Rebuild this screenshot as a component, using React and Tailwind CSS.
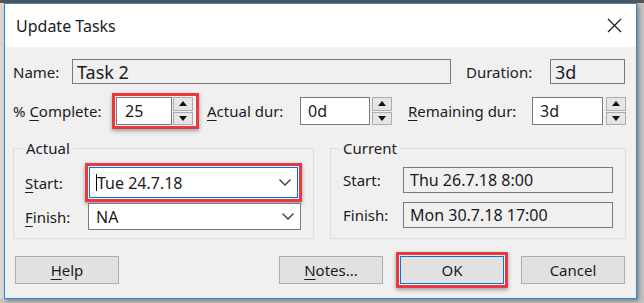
const red = 'border-[3px] border-[#e8393f] p-[1px] shadow-[0_2px_4px_rgba(0,0,0,0.35)]'

function U({ children }) {
  return <span className="underline underline-offset-[3px] decoration-1">{children}</span>
}

function Tri({ down }) {
  return (
    <svg width="8" height="5" viewBox="0 0 8 5">
      <path d={down ? 'M0 0 L8 0 L4 5 Z' : 'M0 5 L4 0 L8 5 Z'} fill="#111" />
    </svg>
  )
}

function Spinner() {
  return (
    <div className="flex flex-col gap-[1px] w-[20px] h-[28px]">
      <div className="flex-1 flex items-center justify-center bg-[#e5e5e5] border border-[#adadad]">
        <Tri />
      </div>
      <div className="flex-1 flex items-center justify-center bg-[#e5e5e5] border border-[#adadad]">
        <Tri down />
      </div>
    </div>
  )
}

function Chevron() {
  return (
    <svg width="12" height="7" viewBox="0 0 12 7">
      <polyline points="0.5,0.5 6,6 11.5,0.5" fill="none" stroke="#3a3a3a" strokeWidth="1.3" />
    </svg>
  )
}

export default function App() {
  return (
    <div className="w-[644px] h-[303px] bg-[#c4c4c4] overflow-hidden font-['Noto_Sans',sans-serif] text-[#1b1b22] text-[15px] leading-[20px]">
      <div className="h-[3px] bg-[#555555]" />
      <div className="flex">
        <div className="w-[4px] h-[296px] bg-[#d8d8d8]" />
        <div className="w-[633px] h-[296px] border border-[#2b88d8] bg-[#f0f0f0] flex flex-col shadow-[2px_2px_4px_rgba(0,0,0,0.35)]">
          {/* title bar */}
          <div className="h-[43px] bg-white flex items-center justify-between pl-[11px] pr-[14px]">
            <span className="text-[16px]">Update Tasks</span>
            <svg width="15" height="15" viewBox="0 0 15 15">
              <path d="M1 1 L14 14 M14 1 L1 14" stroke="#1a1a1a" strokeWidth="1.2" />
            </svg>
          </div>

          <div className="flex-1 px-[8px] pt-[12px]">
            {/* row 1 */}
            <div className="flex items-center h-[25px]">
              <span className="w-[59px]">Name:</span>
              <div className="w-[379px] h-[25px] border border-[#7a7a7a] pl-[4px] flex items-center text-[18px]">Task 2</div>
              <span className="ml-[15px] w-[84px]">Duration:</span>
              <div className="w-[75px] h-[25px] border border-[#7a7a7a] pl-[4px] flex items-center text-[18px]">3d</div>
            </div>

            {/* row 2 */}
            <div className="mt-[9px] flex items-center h-[36px]">
              <span className="w-[99px]">% <U>C</U>omplete:</span>
              <div className={`w-[87px] h-[36px] flex gap-[1px] ${red}`}>
                <div className="w-[56px] h-[28px] bg-white border border-[#7a7a7a] pl-[8px] flex items-center text-[16px]">25</div>
                <Spinner />
              </div>
              <span className="ml-[8px] w-[93px]"><U>A</U>ctual dur:</span>
              <div className="w-[70px] h-[28px] bg-white border border-[#7a7a7a] pl-[7px] flex items-center text-[16px]">0d</div>
              <div className="ml-[2px]"><Spinner /></div>
              <span className="ml-[16px] w-[124px]"><U>R</U>emaining dur:</span>
              <div className="w-[71px] h-[28px] bg-white border border-[#7a7a7a] pl-[7px] flex items-center text-[16px]">3d</div>
              <div className="ml-[3px]"><Spinner /></div>
            </div>

            {/* groups */}
            <div className="mt-[9px] flex gap-[16px]">
              <fieldset className="w-[300px] h-[101px] border border-[#dcdcdc]">
                <legend className="ml-[9px] px-[3px] leading-[20px]">Actual</legend>
                <div className="px-[11px] pt-[5px]">
                  <div className="flex items-center">
                    <span className="w-[60px]"><U>S</U>tart:</span>
                    <div className={`w-[217px] h-[39px] ${red}`}>
                      <div className="h-full bg-white border border-[#0078d7] pl-[6px] pr-[6px] flex items-center justify-between text-[16px]">
                        <span className="flex items-center">
                          <span className="w-[1px] h-[17px] bg-black" />
                          <span>Tue 24.7.18</span>
                        </span>
                        <Chevron />
                      </div>
                    </div>
                  </div>
                  <div className="flex items-center mt-[1px]">
                    <span className="w-[63px]"><U>F</U>inish:</span>
                    <div className="w-[213px] h-[27px] bg-white border border-[#7a7a7a] pl-[7px] pr-[6px] flex items-center justify-between text-[16px]">
                      <span>NA</span>
                      <Chevron />
                    </div>
                  </div>
                </div>
              </fieldset>

              <fieldset className="w-[295px] h-[101px] border border-[#dcdcdc]">
                <legend className="ml-[9px] px-[3px] leading-[20px]">Current</legend>
                <div className="px-[12px] pt-[9px]">
                  <div className="flex items-center">
                    <span className="w-[60px]">Start:</span>
                    <div className="w-[210px] h-[26px] border border-[#7a7a7a] pl-[6px] flex items-center text-[16px]">Thu 26.7.18 8:00</div>
                  </div>
                  <div className="flex items-center mt-[9px]">
                    <span className="w-[60px]">Finish:</span>
                    <div className="w-[210px] h-[26px] border border-[#7a7a7a] pl-[6px] flex items-center text-[16px]">Mon 30.7.18 17:00</div>
                  </div>
                </div>
              </fieldset>
            </div>

            {/* buttons */}
            <div className="mt-[13px] flex items-center h-[36px]">
              <button className="ml-[2px] w-[104px] h-[28px] bg-[#e1e1e1] border border-[#adadad]"><U>H</U>elp</button>
              <button className="ml-[160px] w-[104px] h-[28px] bg-[#e1e1e1] border border-[#adadad]"><U>N</U>otes...</button>
              <div className={`ml-[13px] w-[112px] h-[36px] ${red}`}>
                <button className="w-full h-full bg-[#e1e1e1] border border-[#0078d7]">OK</button>
              </div>
              <button className="ml-[13px] w-[104px] h-[28px] bg-[#e1e1e1] border border-[#adadad]">Cancel</button>
            </div>
          </div>
        </div>
      </div>
    </div>
  )
}
